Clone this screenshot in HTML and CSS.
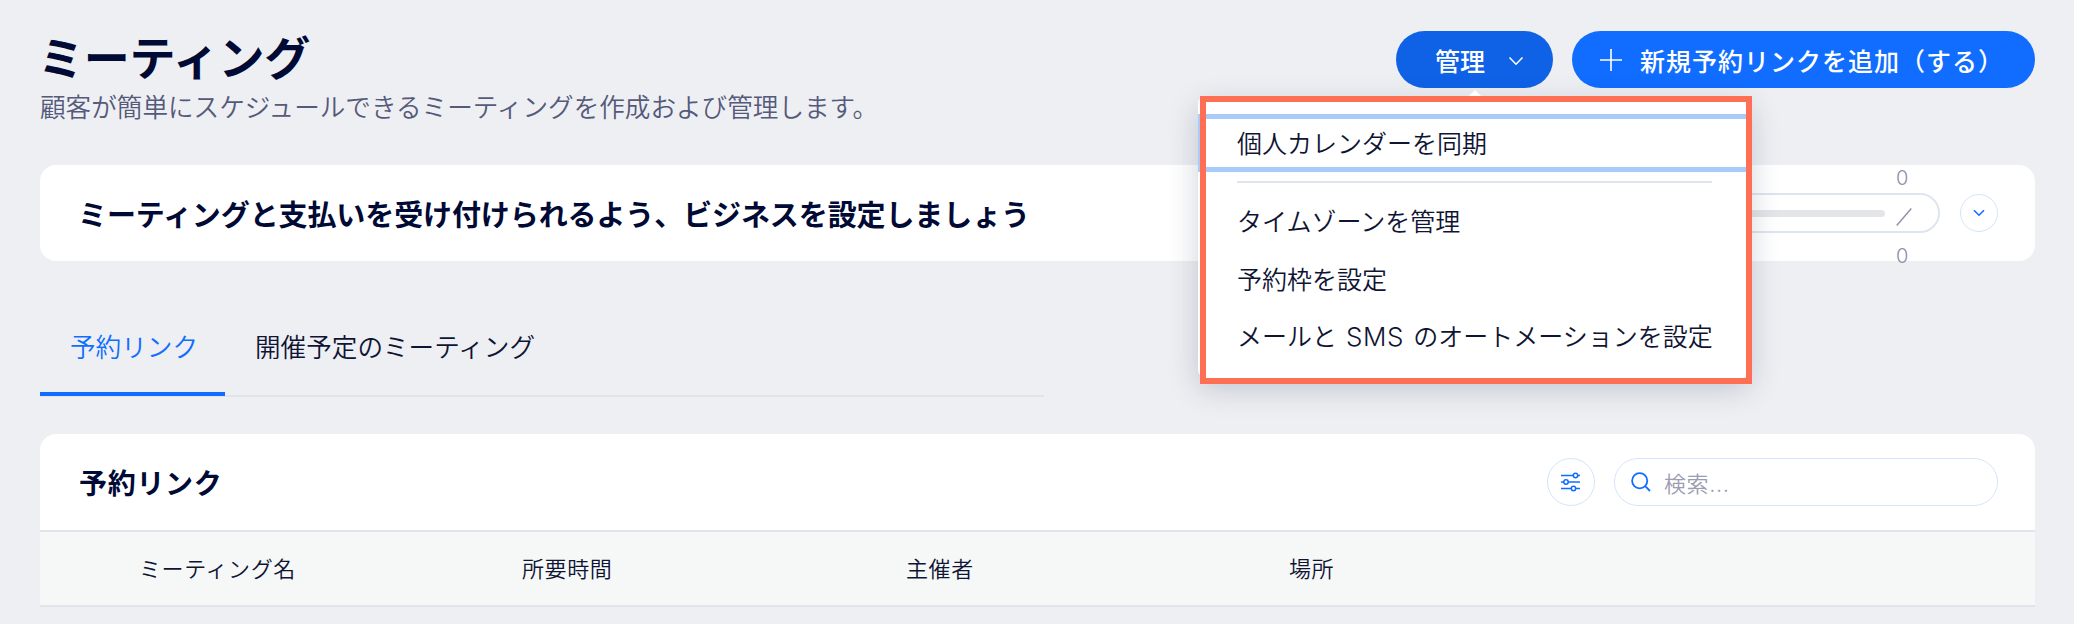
FILE: index.html
```html
<!DOCTYPE html>
<html lang="ja">
<head>
<meta charset="utf-8">
<title>ミーティング</title>
<link rel="stylesheet" href="styles.css">
</head>
<body>
<main class="page">
  <header class="page-header">
    <div class="title-block">
      <h1 class="page-title">ミーティング</h1>
      <p class="page-subtitle">顧客が簡単にスケジュールできるミーティングを作成および管理します。</p>
    </div>
    <div class="actions">
      <div class="manage-wrap">
        <button class="btn btn-manage">
          <span>管理</span>
          <svg class="chev" width="16" height="10" viewBox="0 0 16 10"><path d="M1.5 1.5 8 8.2l6.5-6.7" fill="none" stroke="#fff" stroke-width="1.6"/></svg>
        </button>
        <div class="menu">
          <span class="menu-arrow"></span>
          <div class="menu-item menu-item-focus">個人カレンダーを同期</div>
          <div class="menu-divider"></div>
          <div class="menu-item">タイムゾーンを管理</div>
          <div class="menu-item">予約枠を設定</div>
          <div class="menu-item"><span>メールと <span class="latin">SMS</span> のオートメーションを設定</span></div>
          <div class="menu-frame"></div>
        </div>
      </div>
      <button class="btn btn-add">
        <svg class="plus" width="22" height="22" viewBox="0 0 22 22"><path d="M11 0v22M0 11h22" fill="none" stroke="#fff" stroke-width="1.6"/></svg>
        <span>新規予約リンクを追加（する）</span>
      </button>
    </div>
  </header>

  <section class="setup-card">
    <h2 class="setup-title">ミーティングと支払いを受け付けられるよう、ビジネスを設定しましょう</h2>
    <div class="setup-side">
      <div class="progress-pill">
        <div class="progress-bar"></div>
        <div class="fraction">
          <span>0</span>
          <svg width="16" height="18" viewBox="0 0 16 18"><path d="M.7 17.5 15.3.5" fill="none" stroke="#8f8fa8" stroke-width="1.4"/></svg>
          <span>0</span>
        </div>
      </div>
      <button class="circle-btn circle-small">
        <svg width="12" height="8" viewBox="0 0 12 8"><path d="M1 1.2 6 6.2l5-5" fill="none" stroke="#116dff" stroke-width="1.6"/></svg>
      </button>
    </div>
  </section>

  <nav class="tabs">
    <a class="tab tab-active">予約リンク</a>
    <a class="tab">開催予定のミーティング</a>
  </nav>

  <section class="table-card">
    <div class="table-head">
      <h2 class="table-title">予約リンク</h2>
      <div class="table-tools">
        <button class="circle-btn circle-large">
          <svg width="22" height="20" viewBox="0 0 22 20" fill="none" stroke="#116dff" stroke-width="1.5">
            <path d="M1 3.5h19M1 10h19M1 16.5h19"/>
            <circle cx="15.5" cy="3.5" r="2.2" fill="#fff"/>
            <circle cx="6" cy="10" r="2.2" fill="#fff"/>
            <circle cx="13.5" cy="16.5" r="2.2" fill="#fff"/>
          </svg>
        </button>
        <div class="search">
          <svg width="20" height="20" viewBox="0 0 20 20" fill="none" stroke="#116dff" stroke-width="1.8"><circle cx="8.7" cy="8.7" r="7.6"/><path d="m14.2 14.2 4.8 4.8"/></svg>
          <span class="search-text">検索...</span>
        </div>
      </div>
    </div>
    <div class="table-columns">
      <span class="col col-name">ミーティング名</span>
      <span class="col col-time">所要時間</span>
      <span class="col col-host">主催者</span>
      <span class="col col-place">場所</span>
    </div>
  </section>
</main>
</body>
</html>
```
FILE: styles.css
```css
* { box-sizing: border-box; }
html, body { margin: 0; height: 624px; overflow: hidden; }
body {
  background: #eeeff3;
  color: #0f1433;
  font-family: "Inter", "Noto Sans CJK JP", sans-serif;
}
h1, h2, p { margin: 0; }
button { font: inherit; border: 0; padding: 0; background: none; }

.page { padding: 0 39px 0 40px; }

.page-header { display: flex; justify-content: space-between; height: 165px; padding-top: 31px; }
.page-title { font-size: 46px; line-height: 54px; font-weight: 700; letter-spacing: -.2px; margin-left: -2px; color: #000a35; }
.page-subtitle { font-size: 25.6px; line-height: 34px; font-weight: 350; color: #55597a; margin-top: 6px; }

.actions { display: flex; gap: 19px; height: 57px; }
.manage-wrap { position: relative; }
.btn { display: flex; align-items: center; height: 57px; border-radius: 29px; color: #fff; font-size: 25px; font-weight: 500; }
.btn-manage { width: 157px; padding-left: 39px; gap: 23px; background: #0f62e6; }
.btn-add { width: 463px; padding-left: 28px; gap: 18px; background: #116dff; letter-spacing: 1px; }
.chev { margin-top: 2px; }

.menu {
  position: absolute; top: 65px; left: -198px; width: 552px; height: 282px;
  padding-top: 18px; background: #fff; border-radius: 8px; font-size: 25px; font-weight: 350; color: #0f1433;
  box-shadow: 0 10px 30px rgba(22, 45, 77, .22);
}
.menu-arrow { position: absolute; top: -4px; left: 272px; width: 10px; height: 10px; background: #fff; transform: rotate(45deg); }
.menu-item { display: flex; align-items: center; height: 57.5px; padding: 0 0 3px 39px; word-spacing: 2px; }
.menu-item-focus { height: 58px; border: solid #a9cbfa; border-width: 5px 0 5px 2px; padding: 0 0 3px 37px; }
.latin { font-size: 26px; letter-spacing: .6px; }
.menu-divider { height: 2px; margin: 9px 38px 10px 39px; background: #dfe5ee; }
.menu-frame { position: absolute; top: 0; left: 2px; width: 552px; height: 288px; border: 6px solid #ff6f54; }

.setup-card { display: flex; align-items: center; justify-content: space-between; height: 96px; padding: 0 37px 0 38px; background: #fff; border-radius: 16px; }
.setup-title { font-size: 29px; font-weight: 700; letter-spacing: -.1px; color: #000a35; }
.setup-side { display: flex; align-items: center; gap: 20px; }
.progress-pill { display: flex; align-items: center; gap: 11px; width: 400px; height: 40px; padding: 0 26px 0 20px; border: 2px solid #dfe5ee; border-radius: 20px; }
.progress-bar { flex: 1; height: 7px; border-radius: 4px; background: #e4e5e9; }
.fraction { display: flex; flex-direction: column; align-items: flex-start; justify-content: center; gap: 20px; height: 20px; margin-top: 8px; font-size: 20px; line-height: 20px; font-weight: 300; color: #8f8fa8; }
.fraction > * { flex: none; }
.circle-btn { display: flex; align-items: center; justify-content: center; border: 1.5px solid #d5e4fb; border-radius: 50%; background: #fff; }
.circle-small { width: 38px; height: 38px; }
.circle-large { width: 48px; height: 48px; }

.tabs { display: flex; height: 136px; padding-top: 55px; width: 1004px; background: linear-gradient(#e2e4ea, #e2e4ea) no-repeat 0 134px / 100% 2px; }
.tab { display: block; height: 80px; padding: 14px 30px 0; font-size: 25.6px; line-height: 36px; font-weight: 350; color: #0f1433; white-space: nowrap; }
.tab-active { width: 185px; color: #116dff; border-bottom: 4px solid #116dff; }

.table-card { margin-top: 37px; background: #fff; border-radius: 16px 16px 0 0; overflow: hidden; }
.table-head { display: flex; align-items: center; justify-content: space-between; height: 96px; padding: 0 37px 0 39px; }
.table-title { font-size: 28px; font-weight: 700; letter-spacing: .7px; color: #000a35; }
.table-tools { display: flex; gap: 19px; }
.search { display: flex; align-items: center; gap: 13px; width: 384px; height: 48px; padding-left: 16px; border: 1.5px solid #d5e4fb; border-radius: 24px; }
.search-text { font-size: 22px; font-weight: 350; letter-spacing: .6px; color: #9b9db0; }
.table-columns { display: grid; grid-template-columns: 383px 384px 383px 1fr; align-items: center; height: 77px; padding: 0 0 4px 99px; background: #f6f8f8; border-top: 2px solid #dfe5ea; border-bottom: 2px solid #dfe5ea; font-size: 22px; font-weight: 350; letter-spacing: .6px; color: #0f1433; }
```
